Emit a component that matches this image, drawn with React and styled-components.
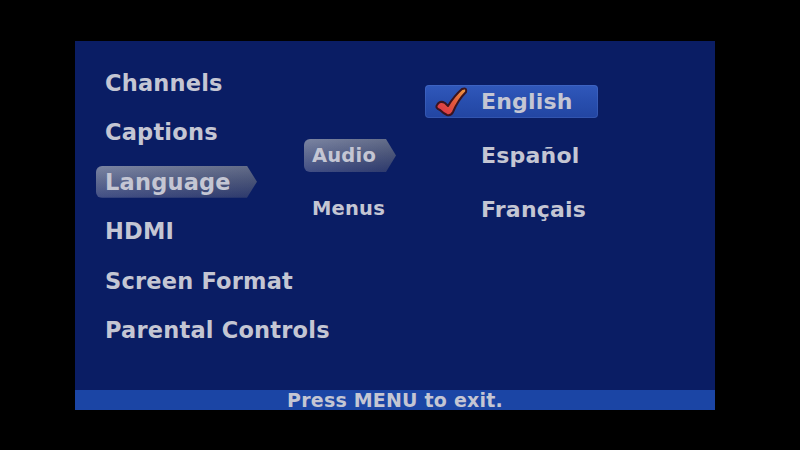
import React from "react";
import styled, { createGlobalStyle } from "styled-components";

const Global = createGlobalStyle`
  html, body { margin: 0; padding: 0; background: #000; }
  body { font-family: "DejaVu Sans", "Liberation Sans", sans-serif; }
`;

const Screen = styled.div`
  width: 800px;
  height: 450px;
  background: #000;
  box-sizing: border-box;
  padding: 41px 85px 40px 75px;
  display: flex;
`;

const Panel = styled.div`
  flex: 1;
  display: flex;
  flex-direction: column;
  background: #0a1d64;
`;

const Content = styled.div`
  flex: 1;
  display: flex;
  padding-left: 21px;
`;

const Column = styled.div`
  width: ${(p) => p.$w}px;
  padding-top: ${(p) => p.$top}px;
  display: flex;
  flex-direction: column;
  box-sizing: border-box;
`;

const Row = styled.div`
  height: ${(p) => p.$h}px;
  display: flex;
  align-items: center;
`;

const Item = styled.div`
  font-weight: bold;
  font-size: ${(p) => p.$size}px;
  color: #c4c6d3;
  letter-spacing: 0.2px;
  white-space: nowrap;
  height: ${(p) => p.$ph}px;
  width: ${(p) => (p.$pw ? p.$pw + "px" : "auto")};
  box-sizing: border-box;
  padding-left: ${(p) => p.$pad}px;
  display: flex;
  align-items: center;
  ${(p) =>
    p.$active &&
    `
    border-radius: 6px 0 0 6px;
    clip-path: polygon(0 0, calc(100% - 10px) 0, 100% 50%, calc(100% - 10px) 100%, 0 100%);
    background:
      linear-gradient(90deg, rgba(255,255,255,0.08) 0%, rgba(0,0,0,0.12) 100%),
      linear-gradient(180deg, #707a9a 0%, #535f88 45%, #32407a 100%);
  `}
`;

const Choice = styled.div`
  font-weight: bold;
  font-size: 22px;
  color: #c4c6d3;
  letter-spacing: 0.2px;
  white-space: nowrap;
  width: 173px;
  height: 33px;
  box-sizing: border-box;
  display: flex;
  align-items: center;
  padding-left: 56px;
  position: relative;
  border-radius: 4px;
  ${(p) =>
    p.$selected &&
    `
    background: linear-gradient(180deg, #3058bb 0%, #284eae 50%, #2245a2 100%);
    box-shadow: inset 0 0 0 1px rgba(110,140,220,0.22);
  `}
`;

const CheckWrap = styled.span`
  position: absolute;
  left: 10px;
  top: 1px;
  width: 34px;
  height: 31px;
`;

const Footer = styled.div`
  height: 20px;
  background: #1b45a5;
  display: flex;
  align-items: center;
  justify-content: center;
  font-weight: bold;
  font-size: 19px;
  color: #c4c6d3;
  letter-spacing: 0.2px;
`;

const Check = () => (
  <CheckWrap>
    <svg width="34" height="31" viewBox="0 0 34 31">
      <defs>
        <linearGradient id="ck" x1="0" y1="1" x2="1" y2="0">
          <stop offset="0" stopColor="#d8304c" />
          <stop offset="0.55" stopColor="#e45a3c" />
          <stop offset="1" stopColor="#eea042" />
        </linearGradient>
      </defs>
      <path
        d="M2 19 Q5 14 10 17 L13 20 Q19 10 27 3 Q32 1 31 6 Q23 14 18 26 Q16 30 12 29 Q8 27 5 24 Q0 22 2 19 Z"
        fill="url(#ck)"
        stroke="#3a1420"
        strokeWidth="2"
        strokeLinejoin="round"
      />
    </svg>
  </CheckWrap>
);

const main = ["Channels", "Captions", "Language", "HDMI", "Screen Format", "Parental Controls"];
const sub = ["Audio", "Menus"];
const langs = ["English", "Español", "Français"];

export default function App() {
  return (
    <>
      <Global />
      <Screen>
        <Panel>
          <Content>
            <Column $w={208} $top={17}>
              {main.map((m) => (
                <Row key={m} $h={49.5}>
                  <Item
                    $size={22.5}
                    $ph={32}
                    $pw={m === "Language" ? 161 : null}
                    $pad={9}
                    $active={m === "Language"}
                  >
                    {m}
                  </Item>
                </Row>
              ))}
            </Column>
            <Column $w={121} $top={88}>
              {sub.map((s) => (
                <Row key={s} $h={53}>
                  <Item $size={19.5} $ph={33} $pw={92} $pad={8} $active={s === "Audio"}>
                    {s}
                  </Item>
                </Row>
              ))}
            </Column>
            <Column $w={200} $top={33}>
              {langs.map((l) => (
                <Row key={l} $h={54}>
                  <Choice $selected={l === "English"}>
                    {l === "English" && <Check />}
                    {l}
                  </Choice>
                </Row>
              ))}
            </Column>
          </Content>
          <Footer>Press MENU to exit.</Footer>
        </Panel>
      </Screen>
    </>
  );
}
